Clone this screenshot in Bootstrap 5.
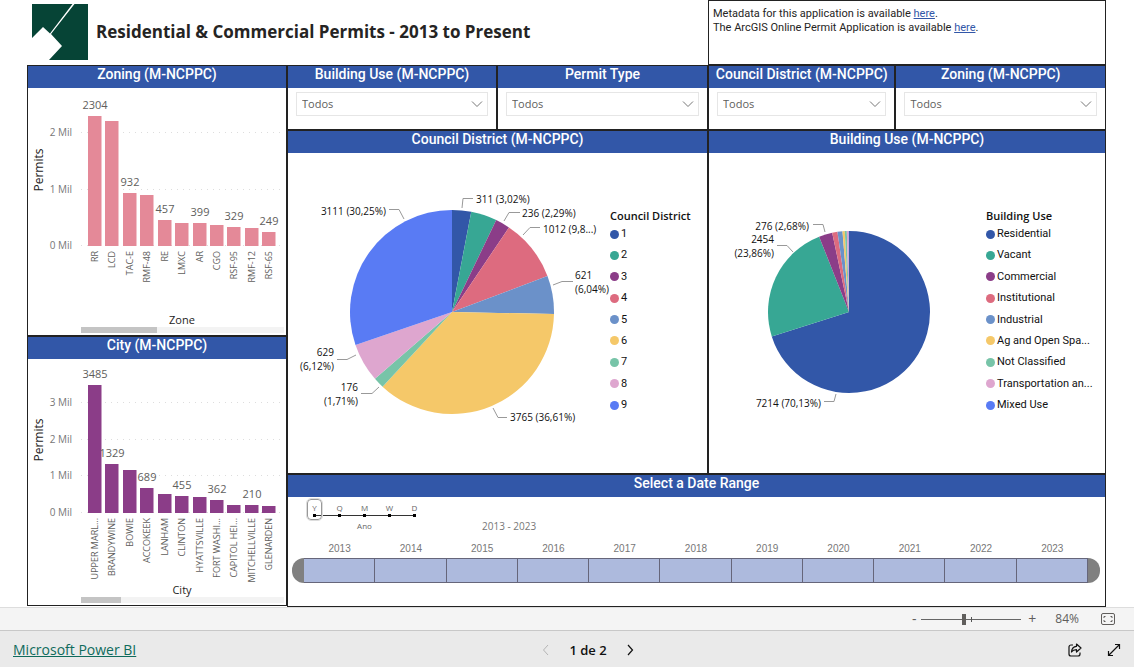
<!DOCTYPE html>
<html lang="en">
<head>
<meta charset="utf-8">
<meta name="viewport" content="width=device-width, initial-scale=1">
<title>Residential &amp; Commercial Permits</title>
<link rel="stylesheet" href="https://cdn.jsdelivr.net/npm/bootstrap@5.3.0/dist/css/bootstrap.min.css">
<style>
:root { --rule: #222; --brand: #3257a8; }
body { font-family: "Open Sans", "Noto Sans", sans-serif; font-size: 11px; line-height: 14px; color: #252423; background: #fff; }
.report { padding-left: 27px; padding-right: 28px; }
.top-grid { display: grid; grid-template-columns: 681fr 398fr; }
.board { display: grid; grid-template-columns: 260fr 421fr 398fr; }
.board > .side { grid-row: 1 / span 3; }
.board > .wide { grid-column: 2 / span 2; }
.slicers-a { display: grid; grid-template-columns: 210fr 211fr; }
.slicers-b { display: grid; grid-template-columns: 187fr 210fr; }
.brand-row { padding-bottom: 2px; }
.page-title { font-size: 17px; line-height: 24px; font-weight: 700; }
.meta-box { border: 1px solid var(--rule); padding: 6px 4px; height: 65px; font-family: Roboto, sans-serif; }
.meta-box a { color: var(--brand); }
.panel { border: 1px solid var(--rule); background: #fff; min-width: 0; }
.panel-title { margin: 0; height: 22px; background: var(--brand); color: #fff; font: 500 14px/16px Roboto, sans-serif; text-align: center; white-space: nowrap; }
.slicer-select.form-select { margin: 4px 8px 13px; width: calc(100% - 16px); height: 24px; padding: 0 24px 0 5px; border: 1px solid #e6e6e6; border-radius: 0; font-size: 11px; line-height: 14px; color: #605e5c; background-position: right 4px center; background-size: 12px 8px;
  background-image: url("data:image/svg+xml,%3Csvg xmlns='http://www.w3.org/2000/svg' viewBox='0 0 12 8'%3E%3Cpath d='M1 1.5l5 5 5-5' fill='none' stroke='%23777'/%3E%3C/svg%3E"); }
svg.chart { display: block; width: 100%; height: auto; }
.chart .tick-text { font-size: 10px; fill: #777; }
.chart .cat-text { font-size: 9px; fill: #605e5c; }
.chart .value-text { font-size: 11px; fill: #605e5c; }
.chart .axis-x { font-size: 11px; fill: #252423; }
.chart .axis-y { font-size: 12px; fill: #252423; }
.chart .slice-text { font-size: 10px; fill: #111; }
.chart .leader { fill: none; stroke: #999; }
.chart .grid-line { stroke: #ddd; stroke-dasharray: 1 5; }
.legend-box { padding-top: 55px; font: 11px/16px Roboto, sans-serif; color: #111; flex: none; }
.legend-box h3 { margin: 0 0 3px; font: 600 11px/15px "Open Sans", sans-serif; }
.legend-box ul { height: 187px; }
.legend-narrow { width: 97px; }
.legend-medium { width: 119px; }
.dot { width: 9px; height: 9px; border-radius: 50%; margin-right: 2px; flex: none; }
.scale-picker { margin-left: 14px; padding-top: 2px; height: 36px; width: 125px; }
.scale-picker label { width: 25px; height: 21px; font: 8px/17px "Open Sans", sans-serif; color: #666; text-align: center; background: linear-gradient(#333, #333) 0 16px / 100% 1px no-repeat; position: relative; }
.scale-picker label::after { content: ""; position: absolute; left: 11px; top: 15px; width: 3px; height: 3px; background: #000; }
.scale-picker label:first-of-type { background-position: 12px 16px; }
.scale-picker label:last-of-type { background-size: 12px 1px; }
.scale-picker .btn-check:checked + label::before { content: ""; position: absolute; inset: 0 5px; border: 1px solid #999; outline: 1px solid #ddd; border-radius: 4px; }
.scale-name { font-size: 8px; line-height: 11px; color: #666; }
.range-text { margin-left: 55px; font-size: 10px; color: #777; }
.years { padding: 9px 17px 2px 16px; font: 10px/14px "Liberation Sans", sans-serif; color: #777; }
.track { padding: 0 5px 0 4px; height: 25px; margin-bottom: 23px; }
.track .year-cell { flex: 1; background: #adbadd; border: 1px solid #66667a; border-left-width: 0; padding: 0; }
.track .handle { width: 12px; background: #808080; border: 0; padding: 0; flex: none; }
.handle-start { border-radius: 12px 0 0 12px; }
.handle-end { border-radius: 0 12px 12px 0; }
.zoom-bar { height: 24px; background: #f4f4f4; border-top: 1px solid #ddd; border-bottom: 1px solid #c8c8c8; padding-right: 19px; color: #605e5c; font-size: 12px; }
.zoom-bar button, .foot-bar button { border: 0; background: none; padding: 0; color: inherit; line-height: 14px; }
.zoom-bar .step { width: 14px; font-size: 14px; }
.zoom-bar .percent { margin: 0 22px 0 16px; }
.zoom-range { appearance: none; -webkit-appearance: none; width: 100px; height: 12px; margin: 0; background: linear-gradient(#555, #555) 50px 4px / 1px 5px no-repeat, linear-gradient(#666, #666) 0 6px / 100% 1px no-repeat; }
.zoom-range::-webkit-slider-thumb { -webkit-appearance: none; width: 4px; height: 11px; background: #605e5c; }
.foot-bar { display: grid; grid-template-columns: 527fr 96px 485fr; align-items: center; min-height: 37px; background: #eaeaea; padding: 0 13px; color: #111; font-size: 13px; }
.foot-bar a { color: #0f6b5c; font-size: 14px; line-height: 20px; }
.foot-bar .faded { color: #b5b5b5; }
</style>
</head>
<body class="d-flex flex-column min-vh-100">
<main class="report flex-grow-1">
  <header class="top-grid">
    <div class="brand-row d-flex align-items-center">
      <svg class="ms-1 me-2" width="57" height="56" viewBox="0 0 57 56" role="img" aria-label="Prince George's County Planning">
        <path fill="#064436" d="M1 0h56v56H18l13-14-11-12L43.500 0h-2L19 29.500 12 23 1 34z"/>
      </svg>
      <h1 class="page-title mb-0">Residential &amp; Commercial Permits - 2013 to Present</h1>
    </div>
    <div class="meta-box">
      Metadata for this application is available <a href="#">here</a>.<br>
      The ArcGIS Online Permit Application is available <a href="#">here</a>.
    </div>
  </header>

  <div class="board">
    <div class="side">
      <section class="panel">
        <h2 class="panel-title">Zoning (M-NCPPC)</h2>
        <svg class="chart" id="zoneChart" viewBox="0 0 258 247" role="img" aria-label="Permits by zone"></svg>
      </section>
      <section class="panel">
        <h2 class="panel-title">City (M-NCPPC)</h2>
        <svg class="chart" id="cityChart" viewBox="0 0 258 246" role="img" aria-label="Permits by city"></svg>
      </section>
    </div>

    <div class="slicers-a">
      <section class="panel">
        <h2 class="panel-title"><label for="useSel">Building Use (M-NCPPC)</label></h2>
        <select class="form-select slicer-select" id="useSel"><option>Todos</option></select>
      </section>
      <section class="panel">
        <h2 class="panel-title"><label for="typeSel">Permit Type</label></h2>
        <select class="form-select slicer-select" id="typeSel"><option>Todos</option></select>
      </section>
    </div>
    <div class="slicers-b">
      <section class="panel">
        <h2 class="panel-title"><label for="districtSel">Council District (M-NCPPC)</label></h2>
        <select class="form-select slicer-select" id="districtSel"><option>Todos</option></select>
      </section>
      <section class="panel">
        <h2 class="panel-title"><label for="zoneSel">Zoning (M-NCPPC)</label></h2>
        <select class="form-select slicer-select" id="zoneSel"><option>Todos</option></select>
      </section>
    </div>

    <section class="panel">
      <h2 class="panel-title">Council District (M-NCPPC)</h2>
      <div class="d-flex">
        <div class="flex-fill"><svg class="chart" id="districtPie" viewBox="-164 -159 322 320" role="img" aria-label="Permits by council district"></svg></div>
        <div class="legend-box legend-narrow"><h3>Council District</h3><ul class="list-unstyled d-flex flex-column justify-content-between mb-0" id="districtLegend"></ul></div>
      </div>
    </section>
    <section class="panel">
      <h2 class="panel-title">Building Use (M-NCPPC)</h2>
      <div class="d-flex">
        <div class="flex-fill"><svg class="chart" id="usePie" viewBox="-140 -159 277 320" role="img" aria-label="Permits by building use"></svg></div>
        <div class="legend-box legend-medium"><h3>Building Use</h3><ul class="list-unstyled d-flex flex-column justify-content-between mb-0" id="useLegend"></ul></div>
      </div>
    </section>

    <section class="panel wide">
      <h2 class="panel-title">Select a Date Range</h2>
      <div class="d-flex align-items-end">
        <div class="scale-picker">
          <div class="d-flex">
            <input class="btn-check" type="radio" name="scale" id="sy" checked><label for="sy">Y</label>
            <input class="btn-check" type="radio" name="scale" id="sq"><label for="sq">Q</label>
            <input class="btn-check" type="radio" name="scale" id="sm"><label for="sm">M</label>
            <input class="btn-check" type="radio" name="scale" id="sw"><label for="sw">W</label>
            <input class="btn-check" type="radio" name="scale" id="sd"><label for="sd">D</label>
          </div>
          <div class="scale-name text-center">Ano</div>
        </div>
        <div class="range-text">2013 - 2023</div>
      </div>
      <div class="years d-flex" id="years"></div>
      <div class="track d-flex" id="track"></div>
    </section>
  </div>
</main>

<div class="zoom-bar d-flex align-items-center justify-content-end">
  <button class="step" aria-label="Zoom out">-</button>
  <input class="zoom-range" type="range" min="0" max="100" value="42" aria-label="Zoom">
  <button class="step ms-1" aria-label="Zoom in">+</button>
  <span class="percent">84%</span>
  <button class="d-flex" aria-label="Fit to page">
    <svg width="14" height="12" viewBox="0 0 14 12" fill="none" stroke="#605e5c"><rect x=".5" y=".5" width="13" height="11" rx="1.500"/><path d="M3 5V3.500h1.500M9.500 3.500H11V5M11 7v1.500H9.500M4.500 8.500H3V7"/></svg>
  </button>
</div>

<footer class="foot-bar">
  <div><a href="#">Microsoft Power BI</a></div>
  <nav class="d-flex align-items-center justify-content-between" aria-label="Pages">
    <button class="d-flex faded" aria-label="Previous page"><svg width="12" height="12" viewBox="0 0 12 12" fill="none" stroke="currentColor"><path d="M8 1L3.500 6 8 11"/></svg></button>
    <span class="fw-semibold">1 de 2</span>
    <button class="d-flex" aria-label="Next page"><svg width="12" height="12" viewBox="0 0 12 12" fill="none" stroke="currentColor" stroke-width="1.200"><path d="M4 1l4.500 5L4 11"/></svg></button>
  </nav>
  <div class="d-flex justify-content-end align-items-center">
    <button class="d-flex me-4" aria-label="Share"><svg width="16" height="14" viewBox="0 0 16 14" fill="none" stroke="#111" stroke-width="1.200" stroke-linejoin="round"><path d="M6 2H4a2 2 0 0 0-2 2v7a2 2 0 0 0 2 2h7a2 2 0 0 0 2-2V9.500"/><path d="M9.500 1l4.500 4-4.500 4V6.700C7 6.700 5.500 7.500 4.500 9c.2-3.500 2-5.500 5-5.700z"/></svg></button>
    <button class="d-flex" aria-label="Full screen"><svg width="14" height="14" viewBox="0 0 14 14" fill="none" stroke="#111" stroke-width="1.200"><path d="M1.500 12.500l11-11M8 1.500h4.500V6M1.500 8v4.500H6"/></svg></button>
  </div>
</footer>

<script src="https://cdn.jsdelivr.net/npm/bootstrap@5.3.0/dist/js/bootstrap.bundle.min.js"></script>
<script>
const byId = id => document.getElementById(id);

// Column chart: rows are [category, value, show value label]
function columnChart(id, o) {
  let out = '';
  for (let m = 0; m <= o.max; m++) {
    const y = Math.round(o.base - m * o.unit);
    out += `<line class="grid-line" x1="53" x2="256" y1="${y - 0.5}" y2="${y - 0.5}"/><text class="tick-text" x="44" y="${y + 3}" text-anchor="end">${m} Mil</text>`;
  }
  let labels = '';
  o.rows.forEach(([name, value, show], i) => {
    const x = Math.round(60 + i * 17.43), h = Math.round(value / 1000 * o.unit);
    out += `<rect x="${x}" y="${o.base - h}" width="13.500" height="${h}" fill="${o.color}"/>`;
    if (show) labels += `<text class="value-text" x="${x + 7}" y="${o.base - h - 7}" text-anchor="middle">${value}</text>`;
    labels += `<text class="cat-text" transform="translate(${x + 10} ${o.base + 5}) rotate(-90)" text-anchor="end">${name}</text>`;
  });
  out += labels;
  out += `<text class="axis-x" x="154" y="${o.foot - 3}" text-anchor="middle">${o.axis}</text>`;
  out += `<text class="axis-y" transform="translate(15 ${o.mid}) rotate(-90)" text-anchor="middle">Permits</text>`;
  out += `<rect x="53" y="${o.foot}" width="203" height="6" fill="#f3f3f3"/><rect x="53" y="${o.foot}" width="${o.thumb}" height="6" fill="#c4c4c4"/>`;
  byId(id).innerHTML = out;
}

columnChart('zoneChart', { base: 158, unit: 56.5, max: 2, color: '#e48998', axis: 'Zone', mid: 82, thumb: 76, foot: 239, rows: [
  ['RR', 2310, 0], ['LCD', 2205], ['TAC-E', 932, 1], ['RMF-48', 905], ['RE', 457, 1], ['LMXC', 415],
  ['AR', 399, 1], ['CGO', 365], ['RSF-95', 329, 1], ['RMF-12', 325], ['RSF-65', 249, 1]].map(r => r[0] === 'RR' ? ['RR', 2304, 1] : r) });
columnChart('cityChart', { base: 154, unit: 36.6, max: 3, color: '#8b3d88', axis: 'City', mid: 81, thumb: 40, foot: 238, rows: [
  ['UPPER MARL...', 3485, 1], ['BRANDYWINE', 1329, 1], ['BOWIE', 1180], ['ACCOKEEK', 689, 1], ['LANHAM', 525], ['CLINTON', 455, 1],
  ['HYATTSVILLE', 445], ['FORT WASHI...', 362, 1], ['CAPITOL HEI...', 215], ['MITCHELLVILLE', 210, 1], ['GLENARDEN', 200]] });

const palette = ['#3257a8', '#37a794', '#8b3d88', '#dd6b7f', '#6b91c9', '#f5c869', '#77c4a8', '#dea6cf', '#597bf4'];

// Pie around 0,0; callouts are [lines, x, y, anchor, leader points]
function pie(id, r, shares, callouts) {
  let a = 0, out = '';
  const total = shares.reduce((s, v) => s + v, 0);
  const pt = t => `${(r * Math.sin(t)).toFixed(2)} ${(-r * Math.cos(t)).toFixed(2)}`;
  shares.forEach((v, i) => {
    const b = a + v / total * 2 * Math.PI;
    out += `<path d="M0 0L${pt(a)}A${r} ${r} 0 ${b - a > Math.PI ? 1 : 0} 1 ${pt(b)}z" fill="${palette[i]}"/>`;
    a = b;
  });
  callouts.forEach(([lines, x, y, anchor, points]) => {
    out += `<polyline class="leader" points="${points}"/>`;
    lines.forEach((t, i) => { out += `<text class="slice-text" x="${x}" y="${y + i * 14}" text-anchor="${anchor}">${t}</text>`; });
  });
  byId(id).innerHTML = out;
}

pie('districtPie', 102, [3.02, 4.12, 2.29, 9.84, 6.04, 36.61, 1.71, 6.12, 30.25], [
  [['311 (3,02%)'], 24, -109, 'start', '10,-104 11,-113.500 21,-113.500'],
  [['236 (2,29%)'], 70, -95, 'start', '52,-91 57,-99.500 68,-99.500'],
  [['1012 (9,8...)'], 91, -79, 'start', '71,-77 78,-84.500 88,-84.500'],
  [['621', '(6,04%)'], 123, -33, 'start', '101,-27 110,-30.500 121,-30.500'],
  [['3765 (36,61%)'], 58, 109, 'start', '41,96 46,105.500 55,105.500'],
  [['176', '(1,71%)'], -94, 79, 'end', '-73,75 -80,81.500 -91,81.500'],
  [['629', '(6,12%)'], -118, 44, 'end', '-96,43 -105,47.500 -115,47.500'],
  [['3111 (30,25%)'], -66, -97, 'end', '-48,-93 -53,-102.500 -63,-102.500']]);
pie('usePie', 81, [70.13, 23.86, 2.68, 1.05, 1, 0.45, 0.4, 0.37, 0.06], [
  [['276 (2,68%)'], -40, -82, 'end', '-24,-80 -26,-87.500 -36,-87.500'],
  [['2454', '(23,86%)'], -75, -69, 'end', '-56,-60 -62,-66.500 -72,-66.500'],
  [['7214 (70,13%)'], -28, 95, 'end', '-13,82 -15,89.500 -25,89.500']]);

function legend(id, names) {
  byId(id).innerHTML = names.map((n, i) => `<li class="d-flex align-items-center text-nowrap"><span class="dot" style="background:${palette[i]}"></span>${n}</li>`).join('');
}
legend('districtLegend', [1, 2, 3, 4, 5, 6, 7, 8, 9]);
legend('useLegend', ['Residential', 'Vacant', 'Commercial', 'Institutional', 'Industrial', 'Ag and Open Spa...', 'Not Classified', 'Transportation an...', 'Mixed Use']);

const years = Array.from({ length: 11 }, (_, i) => 2013 + i);
byId('years').innerHTML = years.map(y => `<div class="flex-fill text-center">${y}</div>`).join('');
byId('track').innerHTML = '<button class="handle handle-start" aria-label="Range start"></button>' +
  years.map(y => `<button class="year-cell" aria-label="${y}"></button>`).join('') +
  '<button class="handle handle-end" aria-label="Range end"></button>';
</script>
</body>
</html>
